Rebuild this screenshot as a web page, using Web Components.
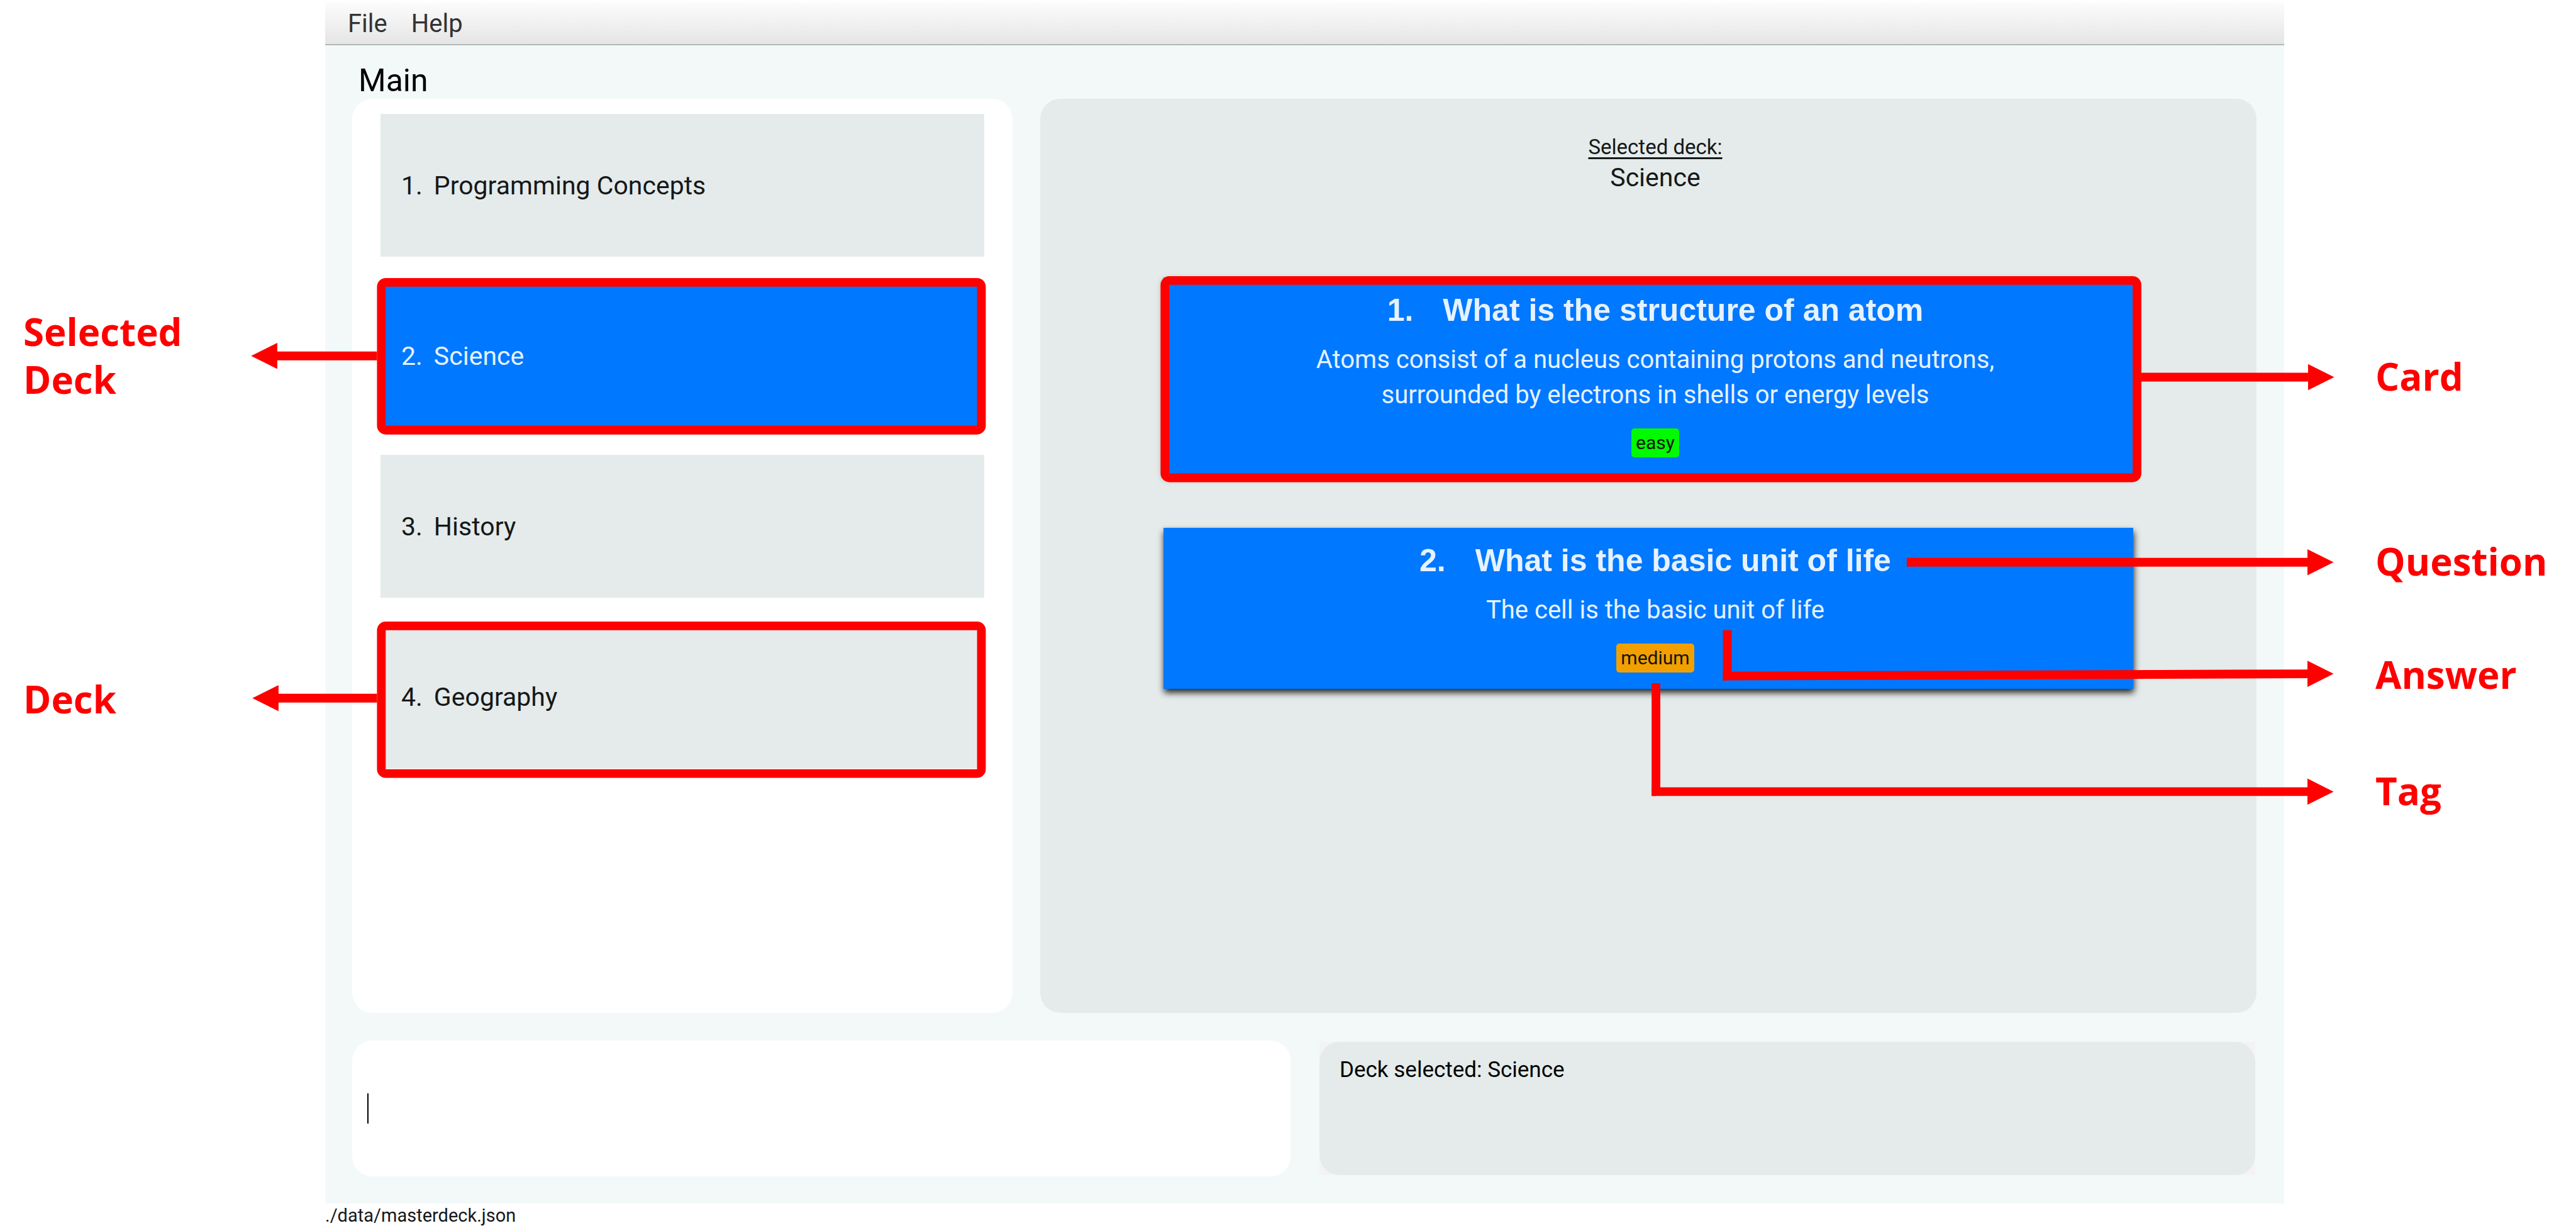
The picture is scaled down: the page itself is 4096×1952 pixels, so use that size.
<!DOCTYPE html>
<html lang="en">
<head>
<meta charset="utf-8">
<title>Master Deck</title>
<style>
html, body { margin: 0; }
body { background: #fff; font-family: Roboto, "Liberation Sans", sans-serif; color: #161819; }
</style>
</head>
<body>
<annotated-shot>
  <callout-label slot="left" style="--top: 489px">Selected<br>Deck</callout-label>
  <callout-label slot="left" style="--top: 1073px">Deck</callout-label>
  <deck-app>
    <menu-bar slot="menu"><menu-item>File</menu-item><menu-item>Help</menu-item></menu-bar>
    <deck-list slot="decks">
      <deck-item number="1">Programming Concepts</deck-item>
      <deck-item number="2" selected>Science</deck-item>
      <deck-item number="3">History</deck-item>
      <deck-item number="4">Geography</deck-item>
    </deck-list>
    <card-panel slot="cards" deck="Science">
      <flash-card number="1" tag="easy">
        <span slot="question">What is the structure of an atom</span>
        Atoms consist of a nucleus containing protons and neutrons,<br>surrounded by electrons in shells or energy levels
      </flash-card>
      <flash-card number="2" tag="medium">
        <span slot="question">What is the basic unit of life</span>
        The cell is the basic unit of life
      </flash-card>
    </card-panel>
    <command-box slot="command"></command-box>
    <result-box slot="result">Deck selected: Science</result-box>
    <status-bar slot="status">./data/masterdeck.json</status-bar>
  </deck-app>
  <callout-label slot="right" style="--top: 560px">Card</callout-label>
  <callout-label slot="right" style="--top: 854px">Question</callout-label>
  <callout-label slot="right" style="--top: 1034px">Answer</callout-label>
  <callout-label slot="right" style="--top: 1219px">Tag</callout-label>
</annotated-shot>

<script>
const define = (name, html, setup) => {
  const tpl = document.createElement('template');
  tpl.innerHTML = html;
  customElements.define(name, class extends HTMLElement {
    constructor() {
      super();
      this.attachShadow({ mode: 'open' }).append(tpl.content.cloneNode(true));
    }
    connectedCallback() { if (setup) setup(this, this.shadowRoot); }
  });
};

define('annotated-shot', `
<style>
:host { display: grid; grid-template-columns: 517px 1fr 464px; min-height: 100vh; position: relative; }
.gutter { position: relative; }
.left { --indent: 37px; }
.right { --indent: 145px; }
svg { position: absolute; inset: 0; width: 100%; height: 100%; pointer-events: none; }
</style>
<div class="gutter left"><slot name="left"></slot></div>
<slot></slot>
<div class="gutter right"><slot name="right"></slot></div>
<svg viewBox="0 0 4134 1970" preserveAspectRatio="none" aria-hidden="true">
  <g fill="none" stroke="#f00" stroke-width="14">
    <rect x="612" y="453" width="963" height="237" rx="7"/>
    <rect x="612" y="1004" width="963" height="237" rx="7"/>
    <rect x="1869.5" y="450" width="1560" height="316.500" rx="7"/>
    <path d="M605 571H444M605 1120H446M3436 605H3704M3060 902H3704M2772 1011V1084.500L3704 1081M2657.500 1096V1270H3704"/>
    <path d="M2765 1084.700h8M2650.500 1270h8"/>
  </g>
  <path fill="#f00" d="M403 571l42-21v42zM405 1120l42-21v42zM3746 605l-42-21v42zM3745 902l-42-21v42zM3745 1081l-42-21v42zM3745 1270l-42-21v42z"/>
</svg>`);

define('callout-label', `
<style>
:host { display: block; position: absolute; top: var(--top); left: var(--indent);
  font: bold 60px/76px "Open Sans", "Noto Sans", sans-serif; color: #f00; }
</style><slot></slot>`);

define('deck-app', `
<style>
:host { display: flex; flex-direction: column; margin-top: 4px; }
main { flex: 1; display: flex; flex-direction: column; background: #f3f9f9; padding: 28px 44px 43px 43px; }
h1 { margin: 0; padding-left: 10px; font-size: 50px; line-height: 57px; font-weight: 400; color: #000; }
.panels { flex: 1; display: grid; grid-template-columns: 1050fr 1934fr; gap: 44px; }
.panels + div { display: grid; grid-template-columns: 1492fr 1488fr; gap: 46px; margin-top: 44px; padding-right: 2px; }
</style>
<slot name="menu"></slot>
<main>
  <h1>Main</h1>
  <div class="panels"><slot name="decks"></slot><slot name="cards"></slot></div>
  <div><slot name="command"></slot><slot name="result"></slot></div>
</main>
<slot name="status"></slot>`);

define('menu-bar', `
<style>
:host { display: flex; align-items: center; gap: 38px; height: 66px; padding-left: 36px;
  background: linear-gradient(#fcfcfc, #e5e5e5); border-bottom: 2px solid #b3b8b6; }
</style><slot></slot>`);

define('menu-item', `
<style>
:host { display: block; }
button { display: block; border: 0; padding: 2px 0 0; background: none; font: inherit; font-size: 40px; line-height: 48px; color: #333; }
</style><button type="button"><slot></slot></button>`);

define('deck-list', `
<style>
:host { display: flex; flex-direction: column; gap: 44px; padding: 24px 45px; border-radius: 32px; background: #fff; }
</style><slot></slot>`);

define('deck-item', `
<style>
:host { display: flex; align-items: center; gap: 18px; height: 227px; padding-left: 33px;
  background: #e4ebea; font-size: 41px; line-height: 52px; }
:host([selected]) { background: #0078ff; color: #e6f2ff; }
</style><span class="n"></span><span><slot></slot></span>`,
(el, root) => { root.querySelector('.n').textContent = el.getAttribute('number') + '.'; });

define('card-panel', `
<style>
:host { display: flex; flex-direction: column; padding: 54px 196px; border-radius: 32px; background: #e4ebea; }
header { padding-left: 22px; margin-bottom: 133px; text-align: center; }
p { margin: 0; font-size: 33px; line-height: 45px; text-decoration: underline; text-decoration-thickness: 3px; text-underline-offset: 5px; text-decoration-skip-ink: none; }
h2 { margin: 0; font-size: 41px; line-height: 52px; font-weight: 400; }
section { display: flex; flex-direction: column; gap: 86px; }
</style>
<header><p>Selected deck:</p><h2></h2></header>
<section><slot></slot></section>`,
(el, root) => { root.querySelector('h2').textContent = el.getAttribute('deck'); });

define('flash-card', `
<style>
:host { display: flex; flex-direction: column; align-items: center; padding: 23px 0 26px 22px;
  background: #0078ff; color: #e6f2ff; box-shadow: 1px 6px 10px rgba(0, 0, 0, .85); }
h3 { display: flex; gap: 47px; margin: 0 0 22px; font: bold 50px/58px "Liberation Sans", sans-serif; }
.answer { margin-bottom: 25px; font-size: 40px; line-height: 56px; text-align: center; }
.tag { padding: 0 7px; border-radius: 5px; font-size: 30px; line-height: 46px; color: #10150c; background: #f2a000; }
:host([tag="easy"]) .tag { background: #00fa00; }
</style>
<h3><span class="n"></span><slot name="question"></slot></h3>
<div class="answer"><slot></slot></div>
<span class="tag"></span>`,
(el, root) => {
  root.querySelector('.n').textContent = el.getAttribute('number') + '.';
  root.querySelector('.tag').textContent = el.getAttribute('tag');
});

define('command-box', `
<style>
:host { display: flex; align-items: center; height: 216px; padding: 0 24px; border-radius: 32px; background: #fff; }
i { width: 2px; height: 48px; background: #000; }
input { flex: 1; border: 0; padding: 0; outline: 0; background: none; font: inherit; font-size: 41px; line-height: 52px; caret-color: transparent; }
</style><i></i><input type="text" aria-label="Command">`);

define('result-box', `
<style>
:host { display: flex; margin: 2px 0; background: #f3f3f3; }
output { flex: 1; padding: 24px 32px; border-radius: 32px; background: #e4ebea; font-size: 35px; line-height: 41px; color: #000; }
</style><output><slot></slot></output>`);

define('status-bar', `
<style>
:host { display: block; background: #fff; font-size: 29px; line-height: 39px; }
</style><slot></slot>`);
</script>
</body>
</html>
